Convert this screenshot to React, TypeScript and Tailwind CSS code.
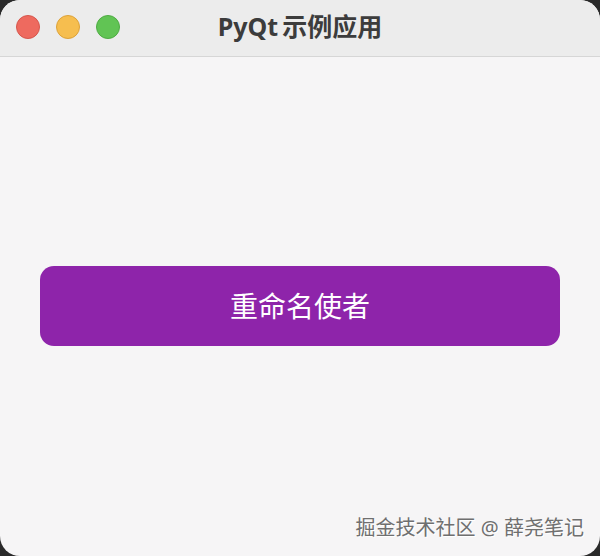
import React from 'react';

const TrafficLight: React.FC<{ color: string; border: string }> = ({ color, border }) => (
    <div className={`w-6 h-6 rounded-full border ${color} ${border}`} />
);

const App: React.FC = () => {
    return (
        <div className="w-[600px] h-[556px] bg-[#2a2a2a]">
            <div
                className="w-full h-full rounded-[20px] overflow-hidden bg-[#f6f5f6] flex flex-col"
                style={{ fontFamily: '"Noto Sans", "Noto Sans CJK SC", sans-serif' }}
            >
                {/* Title bar */}
                <div className="relative h-[57px] shrink-0 bg-[#ececec] border-b border-[#d6d6d6] flex items-center px-4">
                    <div className="flex gap-4 -mt-0.5">
                        <TrafficLight color="bg-[#ee6a5f]" border="border-[#d5574d]" />
                        <TrafficLight color="bg-[#f6be4f]" border="border-[#dca23a]" />
                        <TrafficLight color="bg-[#61c454]" border="border-[#4fab43]" />
                    </div>
                    <div className="absolute inset-0 flex items-center justify-center pb-1 pointer-events-none">
                        <span className="text-[25px] font-bold text-[#3c3c3c] leading-none">
                            PyQt<span className="ml-1">示例应用</span>
                        </span>
                    </div>
                </div>

                {/* Content */}
                <div className="flex-1 flex flex-col px-10">
                    <div className="h-[209px]" />
                    <button className="h-[80px] w-full rounded-[14px] bg-[#8e24aa] text-white text-[28px] flex items-center justify-center">
                        重命名使者
                    </button>
                    <div className="flex-1" />
                    <div className="flex justify-end -mr-6 pb-[13px]">
                        <span className="text-[20px] text-[#6f6f6f] [text-shadow:1px_1px_0_#ffffff]">
                            掘金技术社区 @ 薛尧笔记
                        </span>
                    </div>
                </div>
            </div>
        </div>
    );
};

export default App;
